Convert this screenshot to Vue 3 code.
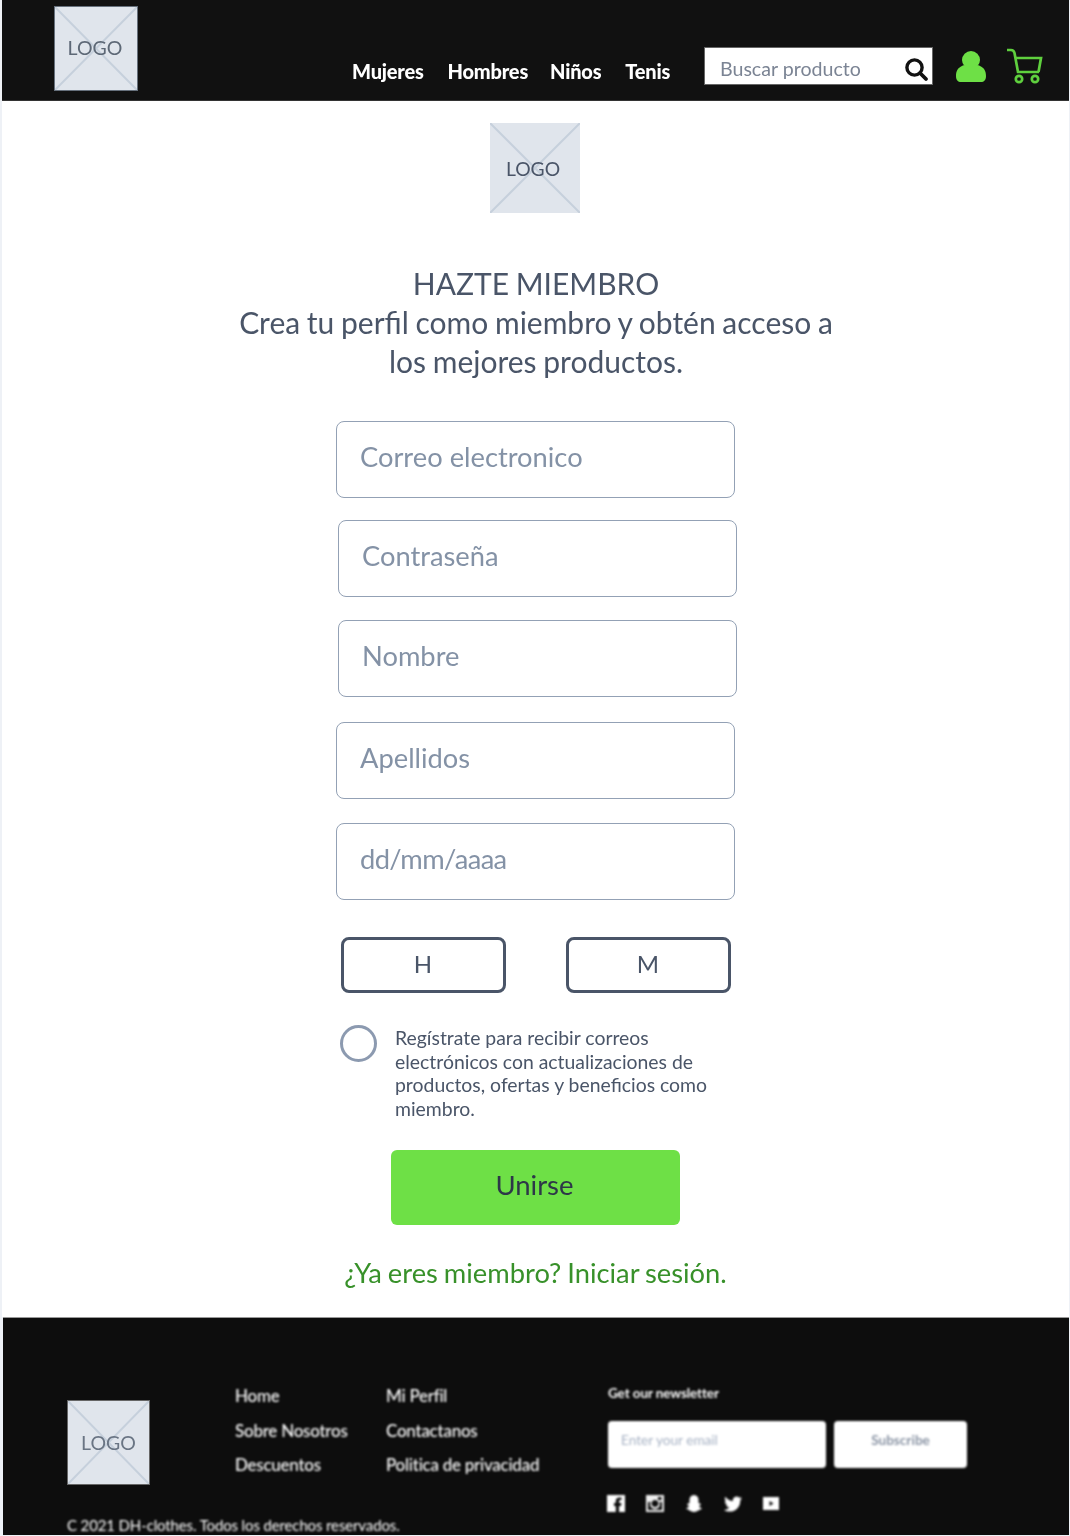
<script setup>
const fields = [
  { text: 'Correo electronico', cls: 'a' },
  { text: 'Contraseña', cls: 'b' },
  { text: 'Nombre', cls: 'b' },
  { text: 'Apellidos', cls: 'a' },
  { text: 'dd/mm/aaaa', cls: 'a date' }
]
const nav = ['Mujeres', 'Hombres', 'Niños', 'Tenis']
</script>

<template>
  <div class="page">
    <header class="top">
      <div class="logo top-logo">
        <svg class="cross" viewBox="0 0 100 100" preserveAspectRatio="none"><path d="M0 0L100 100M100 0L0 100" /></svg>
        <span>LOGO</span>
      </div>
      <nav class="nav">
        <a v-for="n in nav" :key="n">{{ n }}</a>
      </nav>
      <div class="search">
        <span>Buscar producto</span>
        <svg width="26" height="26" viewBox="0 0 26 26"><circle cx="11.5" cy="11.5" r="7.6" fill="none" stroke="#111" stroke-width="3.4"/><path d="M17 17l6 6" stroke="#111" stroke-width="3.8" stroke-linecap="round"/></svg>
      </div>
      <svg class="user" width="30" height="33" viewBox="0 0 30 33"><circle cx="15" cy="10" r="9" fill="#6ee046"/><path d="M0 26c0-5 2-8 5-9.500 2-1 3-1.500 4-1 3 2 9 2 12 0 1-.5 2-.0 4 1 3 1.500 5 4.500 5 9.500 0 4-2 6-5 6H5c-3 0-5-2-5-6z" fill="#6ee046"/></svg>
      <svg class="cart" width="37" height="37" viewBox="0 0 37 37" fill="none" stroke="#5fd03e" stroke-width="2.7"><path d="M1 3h4c2 0 3 1 3.500 3L12 25h21"/><path d="M9 11h26l-2.500 14"/><circle cx="13" cy="32" r="3.200"/><circle cx="29" cy="32" r="3.200"/></svg>
    </header>

    <main class="main">
      <div class="logo mid-logo">
        <svg class="cross" viewBox="0 0 100 100" preserveAspectRatio="none"><path d="M0 0L100 100M100 0L0 100" /></svg>
        <span>LOGO</span>
      </div>
      <h1 class="title">HAZTE MIEMBRO<br>Crea tu perfil como miembro y obtén acceso a<br>los mejores productos.</h1>
      <div class="fields">
        <div v-for="f in fields" :key="f.text" class="field" :class="f.cls">{{ f.text }}</div>
      </div>
      <div class="sex">
        <button class="sex-btn">H</button>
        <button class="sex-btn">M</button>
      </div>
      <div class="opt">
        <span class="radio"></span>
        <p>Regístrate para recibir correos electrónicos con actualizaciones de productos, ofertas y beneficios como miembro.</p>
      </div>
      <button class="join">Unirse</button>
      <a class="member">¿Ya eres miembro? Iniciar sesión.</a>
    </main>

    <footer class="foot">
      <div class="foot-row">
        <div class="foot-left">
          <div class="logo foot-logo">
            <svg class="cross" viewBox="0 0 100 100" preserveAspectRatio="none"><path d="M0 0L100 100M100 0L0 100" /></svg>
            <span>LOGO</span>
          </div>
        </div>
        <ul class="links l1">
          <li>Home</li><li>Sobre Nosotros</li><li>Descuentos</li>
        </ul>
        <ul class="links l2">
          <li>Mi Perfil</li><li>Contactanos</li><li>Politica de privacidad</li>
        </ul>
        <div class="news">
          <div class="news-title">Get our newsletter</div>
          <div class="news-form">
            <div class="email">Enter your email</div>
            <div class="sub">Subscribe</div>
          </div>
          <div class="social">
            <svg width="18" height="17" viewBox="0 0 18 17"><path fill="#fff" fill-rule="evenodd" d="M0 0h18v17H0zM12 17v-6h2l.4-3H12V6.500c0-1 .4-1.500 1.500-1.500h1V2.500h-2C10 2.500 8.800 4 8.800 6v2H7v3h1.800v6z"/></svg>
            <svg width="18" height="17" viewBox="0 0 18 17"><path fill="#eee" fill-rule="evenodd" d="M0 0h18v17H0zM2 7v8h14V7h-2.500a5 5 0 1 1-9 0zM9 5a3.500 3.500 0 1 0 .01 0zM12 2v3h3.500V2z"/></svg>
            <svg width="18" height="17" viewBox="0 0 18 17"><path fill="#fff" d="M9 0c3 0 4.500 2.200 4.500 5v3l2.500 1c0 1-1.500 1.500-2 2 .5 1 1.500 2 3 2.500-.5 1-2 1-2.500 1.300-1 .7-3 2.200-5.500 2.200s-4.500-1.500-5.500-2.200C3 14.500 1.500 14.500 1 13.500c1.500-.5 2.500-1.500 3-2.500-.5-.5-2-1-2-2l2.500-1V5C4.500 2.200 6 0 9 0z"/></svg>
            <svg width="18" height="16" viewBox="0 0 18 16"><path fill="#fff" d="M18 2.200c-.7.300-1.300.5-2.100.6.800-.5 1.300-1.200 1.600-2-.7.400-1.500.7-2.300.9A3.700 3.700 0 0 0 8.900 5C5.900 4.800 3.200 3.400 1.300.7c-1 1.700-.5 3.800 1.100 4.900-.6 0-1.100-.2-1.600-.4 0 1.800 1.200 3.300 2.900 3.700-.5.100-1.100.2-1.600.1.500 1.500 1.800 2.500 3.400 2.500A7.400 7.400 0 0 1 0 14c1.600 1 3.600 1.600 5.700 1.600 6.900 0 10.800-5.800 10.500-11 .7-.6 1.300-1.400 1.800-2.400z"/></svg>
            <svg width="16" height="13" viewBox="0 0 16 13"><path fill="#fff" fill-rule="evenodd" d="M0 0h16v13H0zM6.500 4v5l4-2.500z"/></svg>
          </div>
        </div>
      </div>
      <div class="copy">C 2021 DH-clothes. Todos los derechos reservados.</div>
    </footer>
  </div>
</template>

<style>
html, body { margin: 0; background: #fff; }
</style>

<style scoped>
.page {
  width: 1070px;
  height: 1536px;
  overflow: hidden;
  background: #eef1f6;
  font-family: "Lato", "Liberation Sans", sans-serif;
  color: #4a5568;
  box-sizing: border-box;
  padding-left: 2px;
  padding-right: 1px;
}
.logo {
  position: relative;
  background: #e0e5ec;
  display: flex;
  align-items: center;
  justify-content: center;
  box-sizing: border-box;
}
.logo span { position: relative; }
.cross { position: absolute; inset: 0; width: 100%; height: 100%; }
.cross path { stroke: #c6d0dc; stroke-width: 2; fill: none; vector-effect: non-scaling-stroke; }

.top {
  height: 101px;
  background: #111;
  border-bottom: 1px solid #333;
  box-sizing: border-box;
  display: flex;
  align-items: flex-start;
  padding-left: 52px;
}
.top-logo {
  width: 84px;
  height: 85px;
  margin-top: 6px;
  padding: 0 2px 2px 0;
  font-size: 19.500px;
  color: #5d6876;
  filter: blur(0.7px);
  border: 1px solid #66707c;
  margin-right: 214px;
}
.nav {
  display: flex;
  gap: 24px;
  margin-top: 58px;
  width: 352px;
  color: #fff;
  font-size: 20px;
  font-weight: 900;
  line-height: 26px;
  letter-spacing: -0.2px;
  filter: blur(0.7px);
}
.nav a:nth-child(3) { margin-left: -2px; }
.search {
  width: 229px;
  height: 38px;
  margin-top: 47px;
  background: #fff;
  box-sizing: border-box;
  border: 1px solid #666;
  display: flex;
  align-items: center;
  justify-content: space-between;
  padding: 4px 3px 0 15px;
  font-size: 19.600px;
  color: #7b8494;
  filter: blur(0.7px);
}
.search svg { margin-top: 2px; }
.user { margin: 50px 0 0 23px; filter: blur(0.5px); }
.cart { margin: 47px 0 0 20px; filter: blur(0.5px); }

.main {
  height: 1216px;
  background: #fff;
  display: flex;
  flex-direction: column;
  align-items: center;
  padding-top: 22px;
  box-sizing: border-box;
  filter: blur(0.25px);
}
.mid-logo {
  width: 90px;
  height: 90px;
  margin-left: -1px;
  padding-right: 4px;
  font-size: 19.300px;
  color: #4a5568;
}
.title {
  margin: 51px 0 0 1px;
  font-size: 30px;
  font-weight: 400;
  line-height: 39px;
  word-spacing: -1px;
  text-align: center;
  color: #4a5568;
}
.fields {
  margin-top: 40px;
  margin-left: 2px;
  width: 401px;
  display: flex;
  flex-direction: column;
}
.field {
  width: 399px;
  height: 77px;
  box-sizing: border-box;
  border: 1.5px solid #93a1b5;
  border-radius: 8px;
  font-size: 27.300px;
  color: #8492a6;
  display: flex;
  align-items: center;
  padding-left: 23px;
  padding-bottom: 7px;
  margin-bottom: 22px;
}
.field.b { margin-left: 2px; margin-bottom: 23px; }
.field:nth-child(1) { margin-bottom: 22px; }
.field:nth-child(3) { margin-bottom: 25px; }
.field:nth-child(4) { margin-bottom: 24px; }
.field:last-child { margin-bottom: 0; }
.field.date { letter-spacing: -0.6px; }
.sex {
  margin-top: 37px;
  display: flex;
  gap: 60px;
}
.sex-btn {
  width: 165px;
  height: 56px;
  box-sizing: border-box;
  border: 3px solid #4a5568;
  border-radius: 8px;
  background: #fff;
  font: 400 24px "Lato", sans-serif;
  color: #4a5568;
  padding: 0 0 3px;
}
.opt {
  margin-top: 33px;
  width: 392px;
  margin-left: 1px;
  display: flex;
  align-items: flex-start;
  gap: 18px;
}
.radio {
  flex: none;
  width: 37px;
  height: 37px;
  margin-top: -1px;
  box-sizing: border-box;
  border: 3px solid #8c9ab0;
  border-radius: 50%;
}
.opt p {
  margin: 0;
  font-size: 19.400px;
  line-height: 23.700px;
  color: #4a5568;
}
.join {
  margin-top: 29px;
  width: 289px;
  height: 75px;
  border: 0;
  border-radius: 6px;
  background: #6ee046;
  font: 400 27.500px "Lato", sans-serif;
  color: #2d3748;
  padding: 0 2px 5px 0;
}
.member {
  margin-top: 30px;
  font-size: 27.300px;
  line-height: 36px;
  word-spacing: -1px;
  color: #38912a;
}

.foot {
  height: 218px;
  margin-left: 1px;
  background: #0d0d0d;
  border-top: 1px solid #999;
  box-sizing: border-box;
  position: relative;
  padding-left: 64px;
}
.foot-row { display: flex; align-items: flex-start; }
.foot-left { width: 168px; padding-top: 82px; }
.foot-logo {
  width: 83px;
  height: 85px;
  padding-bottom: 1px;
  font-size: 19.500px;
  color: #6a7584;
  filter: blur(0.7px);
  border: 1px solid #666;
}
.links {
  list-style: none;
  margin: 0;
  padding: 61px 0 0;
  color: #fff;
  font-size: 17px;
  font-weight: 500;
  line-height: 34.500px;
  letter-spacing: -0.25px;
  filter: blur(0.8px);
}
.l1 { width: 151px; }
.l2 { width: 222px; }
.news { padding-top: 66px; }
.news-title {
  color: #fff;
  font-size: 13.500px;
  font-weight: 700;
  line-height: 18px;
  letter-spacing: -0.1px;
  filter: blur(0.9px);
}
.news-form { display: flex; gap: 8px; margin-top: 19px; }
.email, .sub {
  height: 47px;
  background: #fff;
  border-radius: 4px;
  font-size: 13.600px;
  filter: blur(0.9px);
  display: flex;
  align-items: center;
}
.email {
  width: 218px;
  padding: 0 0 9px 13px;
  box-sizing: border-box;
  color: #a7b2c4;
}
.sub {
  width: 133px;
  justify-content: center;
  padding-bottom: 9px;
  box-sizing: border-box;
  color: #8b95a5;
  font-weight: 700;
}
.social {
  display: flex;
  align-items: center;
  gap: 21px;
  margin-top: 27px;
  margin-left: -1px;
  filter: blur(1px);
}
.copy {
  position: absolute;
  left: 64px;
  bottom: 1px;
  color: #fff;
  font-size: 15px;
  line-height: 18px;
  letter-spacing: -0.13px;
  filter: blur(0.8px);
}
</style>
